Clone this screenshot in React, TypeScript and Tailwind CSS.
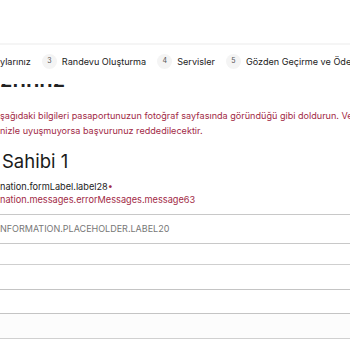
export default function App() {
  const font = { fontFamily: 'Inter, "Noto Sans", sans-serif' };
  return (
    <div className="w-[350px] h-[350px] overflow-hidden bg-white text-[#1a1a1a]" style={font}>
      <div className="h-[43px] bg-white" />
      <div className="h-[2px] bg-[#f5f5f5]" />
      <div className="h-[33px] bg-white flex items-center whitespace-nowrap text-[9.1px] text-[#222] overflow-hidden">
        <div className="flex items-center gap-[11px]">
          <span>ylarınız</span>
          <div className="flex items-center gap-[5px]">
            <span className="w-[15px] h-[15px] rounded-full bg-[#f4f4f4] text-[7px] text-[#555] flex items-center justify-center">3</span>
            <span>Randevu Oluşturma</span>
          </div>
          <div className="flex items-center gap-[5px]">
            <span className="w-[15px] h-[15px] rounded-full bg-[#f4f4f4] text-[7px] text-[#555] flex items-center justify-center">4</span>
            <span>Servisler</span>
          </div>
          <div className="flex items-center gap-[5px]">
            <span className="w-[15px] h-[15px] rounded-full bg-[#f4f4f4] text-[7px] text-[#555] flex items-center justify-center">5</span>
            <span>Gözden Geçirme ve Ödeme</span>
          </div>
        </div>
      </div>
      <div className="mt-[6px] h-[5px] overflow-hidden">
        <div className="mt-[-16px] text-[22px] leading-[22px] font-semibold whitespace-nowrap text-[#222]">znnnz</div>
      </div>
      <div className="pt-[19px] text-[9.1px] leading-[15px] text-[#a22a46] whitespace-nowrap">
        <div>şağıdaki bilgileri pasaportunuzun fotoğraf sayfasında göründüğü gibi doldurun. Ve</div>
        <div>nizle uyuşmuyorsa başvurunuz reddedilecektir.</div>
      </div>
      <div className="pt-[9px] pl-[2px] text-[18.5px] leading-[28px] text-[#1a1a1a]">Sahibi 1</div>
      <div className="pt-[5px] text-[9.2px] leading-[13px] whitespace-nowrap">
        <div className="text-[#222]">nation.formLabel.label28<span className="text-[#a22a46]">•</span></div>
        <div className="text-[#a22a46]">nation.messages.errorMessages.message63</div>
      </div>
      <div className="mt-[8px] h-[30px] border-y border-[#c8c8c8] flex items-center text-[9px] text-[#777] whitespace-nowrap">
        NFORMATION.PLACEHOLDER.LABEL20
      </div>
      <div className="mt-[20px] border-t border-[#cfcfcf] h-[25px]" />
      <div className="border-t border-[#c4c4c4] h-[24px]" />
      <div className="border-t border-[#c4c4c4] h-[25px] bg-[#fcfcfc]" />
      <div className="border-t border-[#d0d0d0] h-[20px]" />
    </div>
  );
}
